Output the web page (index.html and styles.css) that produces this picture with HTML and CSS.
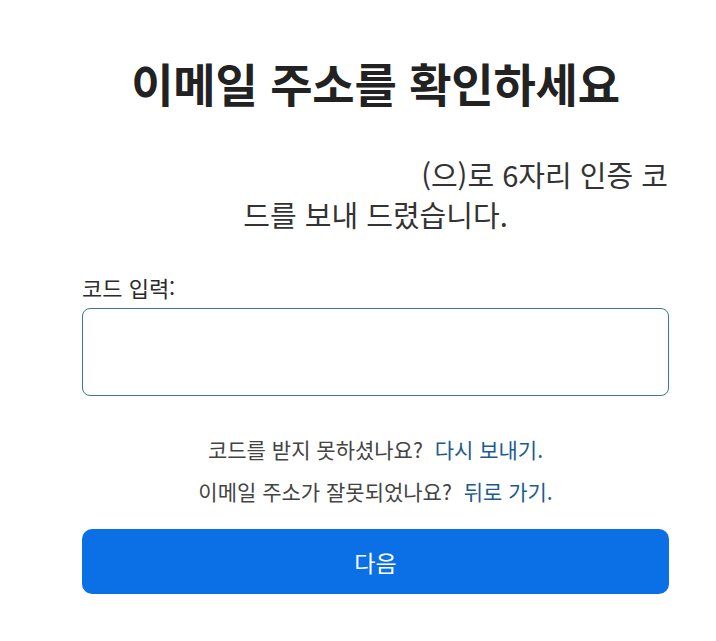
FILE: index.html
```html
<!DOCTYPE html>
<html lang="ko">
<head>
<meta charset="utf-8">
<title>이메일 주소를 확인하세요</title>
<link rel="stylesheet" href="styles.css">
</head>
<body>
<main class="page">
  <h1 class="title">이메일 주소를 확인하세요</h1>
  <p class="lead"><span class="email" aria-hidden="true"></span> (으)로 6자리 인증 코<br>드를 보내 드렸습니다.</p>
  <label class="label" for="code">코드 입력:</label>
  <input class="code-input" id="code" type="text">
  <p class="help">코드를 받지 못하셨나요?&nbsp; <a class="link" href="#">다시 보내기.</a></p>
  <p class="help help-2">이메일 주소가 잘못되었나요?&nbsp; <a class="link" href="#">뒤로 가기.</a></p>
  <button class="next" type="button">다음</button>
</main>
</body>
</html>
```

FILE: styles.css
```css
html, body {
  margin: 0;
  padding: 0;
  background: #ffffff;
}

body {
  font-family: "Noto Sans CJK KR", "Noto Sans", sans-serif;
  color: #2b2b2b;
}

.page {
  width: 587px;
  margin-left: 82px;
  padding-top: 52px;
  display: flex;
  flex-direction: column;
}

.title {
  margin: 0;
  font-size: 46px;
  line-height: 60px;
  font-weight: 700;
  letter-spacing: -0.2px;
  text-align: center;
  color: #222222;
}

.lead {
  margin: 42px 0 0;
  font-size: 29px;
  line-height: 40px;
  text-align: center;
  color: #333333;
}

.email {
  display: inline-block;
  width: 330px;
  height: 20px;
}

.label {
  margin-top: 40px;
  font-size: 22px;
  line-height: 26px;
  color: #2b2b2b;
}

.code-input {
  box-sizing: border-box;
  margin: 8px 0 0;
  width: 587px;
  height: 88px;
  border: 1.5px solid #3d73aa;
  border-radius: 8px;
  background: #ffffff;
  outline: none;
  font-size: 20px;
  padding: 0 14px;
}

.help {
  margin: 39px 0 0;
  font-size: 21px;
  line-height: 28px;
  text-align: center;
  color: #444444;
}

.help-2 {
  margin-top: 14px;
}

.link {
  color: #1d5b93;
  text-decoration: none;
}

.next {
  margin-top: 24px;
  width: 587px;
  height: 65px;
  border: none;
  border-radius: 10px;
  background: #0b70e6;
  color: #ffffff;
  font-family: "Noto Sans CJK KR", "Noto Sans", sans-serif;
  font-size: 23px;
  cursor: pointer;
}
```
